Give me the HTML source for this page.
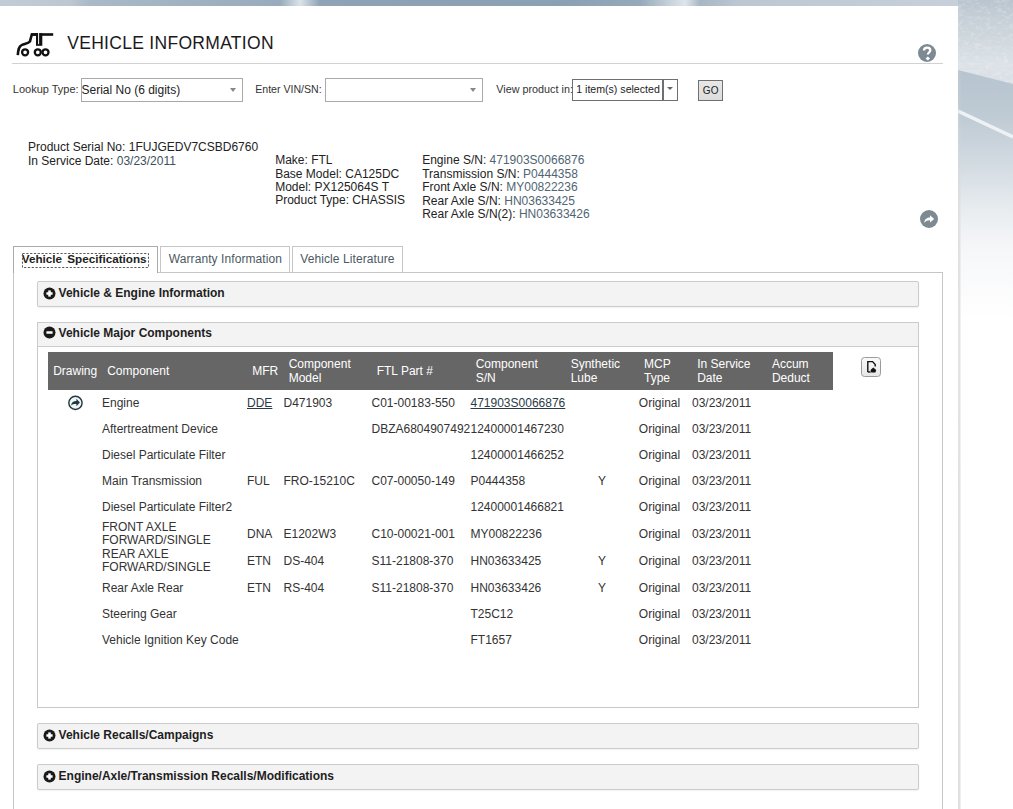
<!DOCTYPE html>
<html><head><meta charset="utf-8"><title>Vehicle Information</title>
<style>
html,body{margin:0;padding:0;width:1013px;height:809px;overflow:hidden;background:#fff}
body{position:relative;font-family:"Liberation Sans",sans-serif}
.t{position:absolute;white-space:nowrap;font-family:"Liberation Sans",sans-serif}
.b{position:absolute}
u{text-decoration:underline;text-underline-offset:1px}
</style></head><body>

<div class="b" style="left:0;top:0;width:1013px;height:809px;background:#fff"></div>
<div class="b" style="left:0;top:0;width:1013px;height:8px;background:linear-gradient(90deg,#c2ccd6 0px,#bcc7d1 70px,#a9b9c8 90px,#a3b4c3 160px,#98abbc 280px,#dbe3e9 300px,#8ea3b5 320px,#8aa0b3 560px,#95a9ba 640px,#dfe6eb 685px,#a8b7c5 700px,#bcc7d2 740px,#c7d0da 958px)"></div>
<svg class="b" style="left:958px;top:0" width="55" height="809" viewBox="0 0 55 809">
<defs>
<linearGradient id="snow" gradientUnits="userSpaceOnUse" x1="0" y1="0" x2="0" y2="90"><stop offset="0" stop-color="#b9c4ce"/><stop offset="0.2" stop-color="#c6cfd7"/><stop offset="0.45" stop-color="#d0d8de"/><stop offset="0.7" stop-color="#dce2e7"/><stop offset="1" stop-color="#d9e0e5"/></linearGradient>
<linearGradient id="road" gradientUnits="userSpaceOnUse" x1="0" y1="70" x2="0" y2="320"><stop offset="0" stop-color="#b7c5d0"/><stop offset="0.16" stop-color="#bdc9d3"/><stop offset="0.28" stop-color="#c8d2da"/><stop offset="0.44" stop-color="#dae1e7"/><stop offset="0.58" stop-color="#eaeef1"/><stop offset="0.72" stop-color="#f6f7f9"/><stop offset="1" stop-color="#ffffff"/></linearGradient>
<linearGradient id="sh" x1="0" y1="0" x2="0" y2="1"><stop offset="0" stop-color="#e6e6e6" stop-opacity="0"/><stop offset="0.12" stop-color="#d8d8d8" stop-opacity="0.2"/><stop offset="0.3" stop-color="#d8d8d8" stop-opacity="0.7"/><stop offset="1" stop-color="#dcdcdc" stop-opacity="0.9"/></linearGradient>
</defs>
<rect x="0" y="0" width="55" height="809" fill="#ffffff"/>
<filter id="nz" x="0" y="0" width="100%" height="100%"><feTurbulence type="fractalNoise" baseFrequency="0.18 0.3" numOctaves="3" seed="7" result="n"/><feColorMatrix in="n" type="matrix" values="0 0 0 0 1  0 0 0 0 1  0 0 0 0 1  1.3 0 0 0 -0.62"/></filter>
<rect x="0" y="0" width="55" height="95" fill="url(#snow)"/>
<rect x="0" y="0" width="55" height="84" fill="#fff" filter="url(#nz)" opacity="0.55"/>
<polygon points="0,70 55,84 55,809 0,809" fill="url(#road)"/>
<line x1="0" y1="111" x2="55" y2="137" stroke="#eef2f5" stroke-width="3.4"/>
<rect x="0" y="6" width="2.5" height="803" fill="url(#sh)"/>
</svg>
<div class="b" style="left:0;top:6px;width:958px;height:803px;background:#fff;"></div>

<svg class="b" style="left:0;top:0" width="80" height="70" viewBox="0 0 80 70">
<path d="M17.8 55.2 C18.2 50 18.6 46.2 22 44.9 C25 43.8 28.6 43.4 29.9 41.6 L31.8 34.5 L38.2 34.5" fill="none" stroke="#111" stroke-width="2.6"/>
<rect x="31" y="33.2" width="22.2" height="2.6" fill="#111"/>
<rect x="36" y="33.2" width="6.3" height="12.6" fill="#111"/>
<rect x="38.1" y="32" width="1.0" height="12.2" fill="#fff"/>
<g fill="none" stroke="#111" stroke-width="2.3">
<circle cx="25.1" cy="52.3" r="3.0"/><circle cx="37.8" cy="52.3" r="3.0"/><circle cx="45.5" cy="52.3" r="3.0"/>
</g></svg>
<div class="t" style="left:67.2px;top:33.34px;font-size:17.5px;line-height:21px;color:#1a1a1a;font-weight:normal;letter-spacing:0.3px">VEHICLE INFORMATION</div>
<div class="b" style="left:12px;top:63px;width:931px;height:1px;background:#d2d2d2"></div>
<svg class="b" style="left:917px;top:43px" width="20" height="20" viewBox="0 0 20 20">
<circle cx="10" cy="10" r="9" fill="#7d8a92"/>
<path d="M7 7.6 C7 5.6 8.4 4.6 10.2 4.6 C12.1 4.6 13.3 5.8 13.3 7.3 C13.3 9.4 10.8 9.6 10.8 11.6" fill="none" stroke="#fff" stroke-width="2.3"/>
<path d="M10.8 13.6 L13 15.6 L10.8 17.4 L8.6 15.6 Z" fill="#fff"/>
</svg>
<div class="t" style="left:12.8px;top:83.29px;font-size:11px;line-height:13px;color:#333;font-weight:normal;">Lookup Type:</div>
<div class="b" style="left:81px;top:78px;width:162px;height:24px;border:1px solid #a9a9a9;box-sizing:border-box;background:#fff"></div>
<div class="t" style="left:81.5px;top:82.64px;font-size:12px;line-height:14px;color:#222;font-weight:normal;">Serial No (6 digits)</div>
<div class="b" style="left:230px;top:88px;width:0;height:0;border-left:3.5px solid transparent;border-right:3.5px solid transparent;border-top:4px solid #888"></div>
<div class="t" style="left:255.2px;top:83.43px;font-size:10.6px;line-height:13px;color:#333;font-weight:normal;">Enter VIN/SN:</div>
<div class="b" style="left:325px;top:78px;width:158px;height:24px;border:1px solid #a9a9a9;box-sizing:border-box;background:#fff"></div>
<div class="b" style="left:469.5px;top:88px;width:0;height:0;border-left:3.5px solid transparent;border-right:3.5px solid transparent;border-top:4px solid #888"></div>
<div class="b" style="left:572px;top:79px;width:106px;height:22px;border:1px solid #6f6f6f;box-sizing:border-box;background:#fff"></div>
<div class="b" style="left:662px;top:79px;width:2px;height:22px;background:#6f6f6f"></div>
<div class="t" style="left:496.3px;top:82.76px;font-size:10.8px;line-height:13px;color:#333;font-weight:normal;">View product in:</div>
<div class="t" style="left:576.2px;top:82.83px;font-size:10.6px;line-height:13px;color:#222;font-weight:normal;">1 item(s) selected</div>
<div class="b" style="left:667px;top:87px;width:0;height:0;border-left:3px solid transparent;border-right:3px solid transparent;border-top:3px solid #666"></div>
<div class="b" style="left:698px;top:80px;width:25px;height:21px;border:1px solid #707070;box-sizing:border-box;background:linear-gradient(#e8e8e8,#dcdcdc)"></div>
<div class="t" style="left:702.8px;top:85.33px;font-size:10px;line-height:12px;color:#222;font-weight:normal;letter-spacing:0.2px">GO</div>
<div class="t" style="left:28.0px;top:140.04px;font-size:12px;line-height:14px;color:#222;font-weight:normal;">Product Serial No: 1FUJGEDV7CSBD6760</div>
<div class="t" style="left:28.0px;top:154.04px;font-size:12px;line-height:14px;color:#222;font-weight:normal;">In Service Date: <span style="color:#3d4f5a">03/23/2011</span></div>
<div class="t" style="left:275.2px;top:152.94px;font-size:12px;line-height:14px;color:#222;font-weight:normal;">Make: FTL</div>
<div class="t" style="left:275.2px;top:167.04px;font-size:12px;line-height:14px;color:#222;font-weight:normal;">Base Model: CA125DC</div>
<div class="t" style="left:275.2px;top:179.74px;font-size:12px;line-height:14px;color:#222;font-weight:normal;">Model: PX125064S T</div>
<div class="t" style="left:275.2px;top:193.14px;font-size:12px;line-height:14px;color:#222;font-weight:normal;">Product Type: CHASSIS</div>
<div class="t" style="left:422.2px;top:152.74px;font-size:12px;line-height:14px;color:#222;font-weight:normal;">Engine S/N: <span style="color:#4f6572">471903S0066876</span></div>
<div class="t" style="left:422.2px;top:167.04px;font-size:12px;line-height:14px;color:#222;font-weight:normal;">Transmission S/N: <span style="color:#4f6572">P0444358</span></div>
<div class="t" style="left:422.2px;top:179.94px;font-size:12px;line-height:14px;color:#222;font-weight:normal;">Front Axle S/N: <span style="color:#4f6572">MY00822236</span></div>
<div class="t" style="left:422.2px;top:193.54px;font-size:12px;line-height:14px;color:#222;font-weight:normal;">Rear Axle S/N: <span style="color:#4f6572">HN03633425</span></div>
<div class="t" style="left:422.2px;top:207.14px;font-size:12px;line-height:14px;color:#222;font-weight:normal;">Rear Axle S/N(2): <span style="color:#4f6572">HN03633426</span></div>
<svg class="b" style="left:919px;top:209px" width="20" height="20" viewBox="0 0 20 20">
<circle cx="10" cy="10" r="9" fill="#7d8a92"/>
<path d="M5.2 13.8 C5.6 10.2 8 8.6 11 8.6 L11 6.2 L15.2 10 L11 13.6 L11 11.2 C8.8 11.1 6.8 11.8 5.2 13.8 Z" fill="#fff"/>
</svg>
<div class="b" style="left:13px;top:272px;width:930px;height:628px;border:1px solid #c6c6c6;box-sizing:border-box;background:#fff"></div>
<div class="b" style="left:13px;top:246px;width:145px;height:27px;border:1px solid #aaa;border-bottom:none;box-sizing:border-box;background:#fff"></div>
<div class="t" style="left:21.8px;top:252.15px;font-size:11.7px;line-height:14px;color:#222;font-weight:bold;word-spacing:2px">Vehicle Specifications</div>
<svg class="b" style="left:22px;top:253px" width="128" height="16"><rect x="0.5" y="0.5" width="126" height="14" fill="none" stroke="#5a5a5a" stroke-width="1" stroke-dasharray="2.2 1.6"/></svg>
<div class="b" style="left:160px;top:246px;width:130px;height:27px;border:1px solid #c6c6c6;box-sizing:border-box;background:#fff"></div>
<div class="t" style="left:168.8px;top:251.94px;font-size:12px;line-height:14px;color:#4b5962;font-weight:normal;letter-spacing:0.08px">Warranty Information</div>
<div class="b" style="left:292px;top:246px;width:111px;height:27px;border:1px solid #c6c6c6;box-sizing:border-box;background:#fff"></div>
<div class="t" style="left:300.3px;top:251.94px;font-size:12px;line-height:14px;color:#4b5962;font-weight:normal;letter-spacing:0.08px">Vehicle Literature</div>
<div class="b" style="left:37px;top:281px;width:882px;height:26px;border:1px solid #cbcbcb;box-sizing:border-box;background:#f3f3f3;border-radius:2px;box-shadow:0 1px 2px rgba(0,0,0,0.06)"></div>
<svg class="b" style="left:42.5px;top:286.9px" width="13" height="13" viewBox="0 0 13 13"><circle cx="6.5" cy="6.5" r="6" fill="#1a1a1a"/><rect x="3.4" y="5.25" width="6.2" height="2.5" fill="#fff"/><rect x="5.25" y="3.4" width="2.5" height="6.2" fill="#fff"/></svg>
<div class="t" style="left:58.6px;top:286.14px;font-size:12px;line-height:14px;color:#1e1e1e;font-weight:bold;">Vehicle &amp; Engine Information</div>
<div class="b" style="left:37px;top:322px;width:882px;height:386px;border:1px solid #c8c8c8;box-sizing:border-box;background:#fff"></div>
<div class="b" style="left:37px;top:322px;width:882px;height:25px;border:1px solid #cbcbcb;box-sizing:border-box;background:#f3f3f3"></div>
<svg class="b" style="left:42.5px;top:326.3px" width="13" height="13" viewBox="0 0 13 13"><circle cx="6.5" cy="6.5" r="6" fill="#1a1a1a"/><rect x="3.4" y="5.25" width="6.2" height="2.5" fill="#fff"/></svg>
<div class="t" style="left:58.6px;top:325.74px;font-size:12px;line-height:14px;color:#1e1e1e;font-weight:bold;">Vehicle Major Components</div>
<div class="b" style="left:37px;top:723px;width:882px;height:26px;border:1px solid #cbcbcb;box-sizing:border-box;background:#f3f3f3;border-radius:2px;box-shadow:0 1px 2px rgba(0,0,0,0.06)"></div>
<svg class="b" style="left:42.5px;top:728.9px" width="13" height="13" viewBox="0 0 13 13"><circle cx="6.5" cy="6.5" r="6" fill="#1a1a1a"/><rect x="3.4" y="5.25" width="6.2" height="2.5" fill="#fff"/><rect x="5.25" y="3.4" width="2.5" height="6.2" fill="#fff"/></svg>
<div class="t" style="left:58.6px;top:728.14px;font-size:12px;line-height:14px;color:#1e1e1e;font-weight:bold;">Vehicle Recalls/Campaigns</div>
<div class="b" style="left:37px;top:764px;width:882px;height:26px;border:1px solid #cbcbcb;box-sizing:border-box;background:#f3f3f3;border-radius:2px;box-shadow:0 1px 2px rgba(0,0,0,0.06)"></div>
<svg class="b" style="left:42.5px;top:769.9px" width="13" height="13" viewBox="0 0 13 13"><circle cx="6.5" cy="6.5" r="6" fill="#1a1a1a"/><rect x="3.4" y="5.25" width="6.2" height="2.5" fill="#fff"/><rect x="5.25" y="3.4" width="2.5" height="6.2" fill="#fff"/></svg>
<div class="t" style="left:58.6px;top:769.14px;font-size:12px;line-height:14px;color:#1e1e1e;font-weight:bold;">Engine/Axle/Transmission Recalls/Modifications</div>
<div class="b" style="left:48px;top:352px;width:785px;height:38px;background:#666"></div>
<div class="t" style="left:53.2px;top:364.04px;font-size:12px;line-height:14px;color:#fff;font-weight:normal;">Drawing</div>
<div class="t" style="left:107.2px;top:364.04px;font-size:12px;line-height:14px;color:#fff;font-weight:normal;">Component</div>
<div class="t" style="left:252.2px;top:364.04px;font-size:12px;line-height:14px;color:#fff;font-weight:normal;">MFR</div>
<div class="t" style="left:288.7px;top:358.14px;font-size:12px;line-height:13.8px;color:#fff;font-weight:normal;">Component<br>Model</div>
<div class="t" style="left:376.7px;top:364.04px;font-size:12px;line-height:14px;color:#fff;font-weight:normal;">FTL Part #</div>
<div class="t" style="left:475.7px;top:358.14px;font-size:12px;line-height:13.8px;color:#fff;font-weight:normal;">Component<br>S/N</div>
<div class="t" style="left:570.7px;top:358.14px;font-size:12px;line-height:13.8px;color:#fff;font-weight:normal;">Synthetic<br>Lube</div>
<div class="t" style="left:644.0px;top:358.14px;font-size:12px;line-height:13.8px;color:#fff;font-weight:normal;">MCP<br>Type</div>
<div class="t" style="left:697.2px;top:358.14px;font-size:12px;line-height:13.8px;color:#fff;font-weight:normal;">In Service<br>Date</div>
<div class="t" style="left:771.9px;top:358.14px;font-size:12px;line-height:13.8px;color:#fff;font-weight:normal;">Accum<br>Deduct</div>
<svg class="b" style="left:861px;top:357px" width="20" height="20" viewBox="0 0 20 20">
<defs><linearGradient id="eg" x1="0" y1="0" x2="0" y2="1"><stop offset="0" stop-color="#fafafa"/><stop offset="1" stop-color="#e6e6e6"/></linearGradient></defs>
<rect x="0.5" y="0.5" width="19" height="19" rx="3" fill="url(#eg)" stroke="#9a9a9a"/>
<path d="M6.8 15 L6.8 4.6 L11.6 4.6 L14.2 7.4 L14.2 9.5" fill="none" stroke="#111" stroke-width="1.4"/>
<path d="M6.8 15 L9.6 15" fill="none" stroke="#111" stroke-width="1.4"/>
<path d="M12.3 10.6 L15.2 13 L14.4 15.6 L10.3 15.6 L9.5 13 Z" fill="#111"/>
</svg>
<div class="t" style="left:102.0px;top:395.64px;font-size:12px;line-height:14px;color:#333;font-weight:normal;">Engine</div>
<div class="t" style="left:247.0px;top:395.64px;font-size:12px;line-height:14px;color:#333;font-weight:normal;"><u style="color:#2b3b45">DDE</u></div>
<div class="t" style="left:283.5px;top:395.64px;font-size:12px;line-height:14px;color:#333;font-weight:normal;">D471903</div>
<div class="t" style="left:371.5px;top:395.64px;font-size:12px;line-height:14px;color:#333;font-weight:normal;">C01-00183-550</div>
<div class="t" style="left:470.5px;top:395.64px;font-size:12px;line-height:14px;color:#333;font-weight:normal;"><u style="color:#2b3b45">471903S0066876</u></div>
<div class="t" style="left:638.8px;top:395.64px;font-size:12px;line-height:14px;color:#333;font-weight:normal;">Original</div>
<div class="t" style="left:692.0px;top:395.64px;font-size:12px;line-height:14px;color:#333;font-weight:normal;">03/23/2011</div>
<div class="t" style="left:102.0px;top:422.04px;font-size:12px;line-height:14px;color:#333;font-weight:normal;">Aftertreatment Device</div>
<div class="t" style="left:371.5px;top:422.04px;font-size:12px;line-height:14px;color:#333;font-weight:normal;">DBZA6804907492</div>
<div class="t" style="left:470.5px;top:422.04px;font-size:12px;line-height:14px;color:#333;font-weight:normal;">12400001467230</div>
<div class="t" style="left:638.8px;top:422.04px;font-size:12px;line-height:14px;color:#333;font-weight:normal;">Original</div>
<div class="t" style="left:692.0px;top:422.04px;font-size:12px;line-height:14px;color:#333;font-weight:normal;">03/23/2011</div>
<div class="t" style="left:102.0px;top:448.04px;font-size:12px;line-height:14px;color:#333;font-weight:normal;">Diesel Particulate Filter</div>
<div class="t" style="left:470.5px;top:448.04px;font-size:12px;line-height:14px;color:#333;font-weight:normal;">12400001466252</div>
<div class="t" style="left:638.8px;top:448.04px;font-size:12px;line-height:14px;color:#333;font-weight:normal;">Original</div>
<div class="t" style="left:692.0px;top:448.04px;font-size:12px;line-height:14px;color:#333;font-weight:normal;">03/23/2011</div>
<div class="t" style="left:102.0px;top:474.04px;font-size:12px;line-height:14px;color:#333;font-weight:normal;">Main Transmission</div>
<div class="t" style="left:247.0px;top:474.04px;font-size:12px;line-height:14px;color:#333;font-weight:normal;">FUL</div>
<div class="t" style="left:283.5px;top:474.04px;font-size:12px;line-height:14px;color:#333;font-weight:normal;">FRO-15210C</div>
<div class="t" style="left:371.5px;top:474.04px;font-size:12px;line-height:14px;color:#333;font-weight:normal;">C07-00050-149</div>
<div class="t" style="left:470.5px;top:474.04px;font-size:12px;line-height:14px;color:#333;font-weight:normal;">P0444358</div>
<div class="t" style="left:565.5px;top:474.04px;font-size:12px;line-height:14px;color:#333;font-weight:normal;width:73px;text-align:center">Y</div>
<div class="t" style="left:638.8px;top:474.04px;font-size:12px;line-height:14px;color:#333;font-weight:normal;">Original</div>
<div class="t" style="left:692.0px;top:474.04px;font-size:12px;line-height:14px;color:#333;font-weight:normal;">03/23/2011</div>
<div class="t" style="left:102.0px;top:499.64px;font-size:12px;line-height:14px;color:#333;font-weight:normal;">Diesel Particulate Filter2</div>
<div class="t" style="left:470.5px;top:499.64px;font-size:12px;line-height:14px;color:#333;font-weight:normal;">12400001466821</div>
<div class="t" style="left:638.8px;top:499.64px;font-size:12px;line-height:14px;color:#333;font-weight:normal;">Original</div>
<div class="t" style="left:692.0px;top:499.64px;font-size:12px;line-height:14px;color:#333;font-weight:normal;">03/23/2011</div>
<div class="t" style="left:102.0px;top:520.79px;font-size:12px;line-height:13.5px;color:#333;font-weight:normal;">FRONT AXLE<br>FORWARD/SINGLE</div>
<div class="t" style="left:247.0px;top:526.84px;font-size:12px;line-height:14px;color:#333;font-weight:normal;">DNA</div>
<div class="t" style="left:283.5px;top:526.84px;font-size:12px;line-height:14px;color:#333;font-weight:normal;">E1202W3</div>
<div class="t" style="left:371.5px;top:526.84px;font-size:12px;line-height:14px;color:#333;font-weight:normal;">C10-00021-001</div>
<div class="t" style="left:470.5px;top:526.84px;font-size:12px;line-height:14px;color:#333;font-weight:normal;">MY00822236</div>
<div class="t" style="left:638.8px;top:526.84px;font-size:12px;line-height:14px;color:#333;font-weight:normal;">Original</div>
<div class="t" style="left:692.0px;top:526.84px;font-size:12px;line-height:14px;color:#333;font-weight:normal;">03/23/2011</div>
<div class="t" style="left:102.0px;top:547.79px;font-size:12px;line-height:13.5px;color:#333;font-weight:normal;">REAR AXLE<br>FORWARD/SINGLE</div>
<div class="t" style="left:247.0px;top:553.84px;font-size:12px;line-height:14px;color:#333;font-weight:normal;">ETN</div>
<div class="t" style="left:283.5px;top:553.84px;font-size:12px;line-height:14px;color:#333;font-weight:normal;">DS-404</div>
<div class="t" style="left:371.5px;top:553.84px;font-size:12px;line-height:14px;color:#333;font-weight:normal;">S11-21808-370</div>
<div class="t" style="left:470.5px;top:553.84px;font-size:12px;line-height:14px;color:#333;font-weight:normal;">HN03633425</div>
<div class="t" style="left:565.5px;top:553.84px;font-size:12px;line-height:14px;color:#333;font-weight:normal;width:73px;text-align:center">Y</div>
<div class="t" style="left:638.8px;top:553.84px;font-size:12px;line-height:14px;color:#333;font-weight:normal;">Original</div>
<div class="t" style="left:692.0px;top:553.84px;font-size:12px;line-height:14px;color:#333;font-weight:normal;">03/23/2011</div>
<div class="t" style="left:102.0px;top:580.64px;font-size:12px;line-height:14px;color:#333;font-weight:normal;">Rear Axle Rear</div>
<div class="t" style="left:247.0px;top:580.64px;font-size:12px;line-height:14px;color:#333;font-weight:normal;">ETN</div>
<div class="t" style="left:283.5px;top:580.64px;font-size:12px;line-height:14px;color:#333;font-weight:normal;">RS-404</div>
<div class="t" style="left:371.5px;top:580.64px;font-size:12px;line-height:14px;color:#333;font-weight:normal;">S11-21808-370</div>
<div class="t" style="left:470.5px;top:580.64px;font-size:12px;line-height:14px;color:#333;font-weight:normal;">HN03633426</div>
<div class="t" style="left:565.5px;top:580.64px;font-size:12px;line-height:14px;color:#333;font-weight:normal;width:73px;text-align:center">Y</div>
<div class="t" style="left:638.8px;top:580.64px;font-size:12px;line-height:14px;color:#333;font-weight:normal;">Original</div>
<div class="t" style="left:692.0px;top:580.64px;font-size:12px;line-height:14px;color:#333;font-weight:normal;">03/23/2011</div>
<div class="t" style="left:102.0px;top:606.74px;font-size:12px;line-height:14px;color:#333;font-weight:normal;">Steering Gear</div>
<div class="t" style="left:470.5px;top:606.74px;font-size:12px;line-height:14px;color:#333;font-weight:normal;">T25C12</div>
<div class="t" style="left:638.8px;top:606.74px;font-size:12px;line-height:14px;color:#333;font-weight:normal;">Original</div>
<div class="t" style="left:692.0px;top:606.74px;font-size:12px;line-height:14px;color:#333;font-weight:normal;">03/23/2011</div>
<div class="t" style="left:102.0px;top:632.84px;font-size:12px;line-height:14px;color:#333;font-weight:normal;">Vehicle Ignition Key Code</div>
<div class="t" style="left:470.5px;top:632.84px;font-size:12px;line-height:14px;color:#333;font-weight:normal;">FT1657</div>
<div class="t" style="left:638.8px;top:632.84px;font-size:12px;line-height:14px;color:#333;font-weight:normal;">Original</div>
<div class="t" style="left:692.0px;top:632.84px;font-size:12px;line-height:14px;color:#333;font-weight:normal;">03/23/2011</div>
<svg class="b" style="left:66px;top:394px" width="19" height="18" viewBox="0 0 19 18">
<circle cx="9.45" cy="8.85" r="6.65" fill="#eef6f8" stroke="#24383f" stroke-width="1.45"/>
<path d="M5 11.4 C5.5 8.6 7.5 7.1 10.4 7.1 L10.4 4.8 L13.9 8.5 L10.4 12.3 L10.4 10.1 C8.2 10 6.5 10.3 5 11.4 Z" fill="#24383f"/>
</svg>
</body></html>
